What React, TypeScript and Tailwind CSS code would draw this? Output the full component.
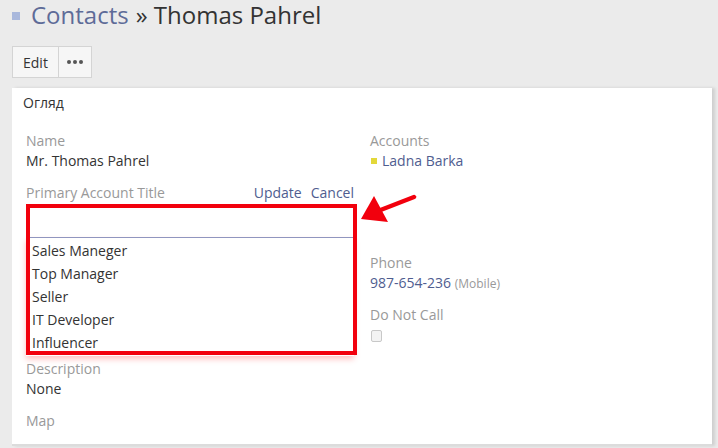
import React from 'react';

const font = { fontFamily: '"Open Sans", "Liberation Sans", sans-serif' };

function Field({ label, children, className = '' }: { label: string; children?: React.ReactNode; className?: string }) {
  return (
    <div className={className}>
      <div className="text-[14px] leading-[20px] text-[#999]">{label}</div>
      {children}
    </div>
  );
}

export default function App() {
  const titles = ['Sales Maneger', 'Top Manager', 'Seller', 'IT Developer', 'Influencer'];

  return (
    <div className="relative w-[718px] h-[448px] overflow-hidden bg-[#ebebeb] text-[#333]" style={font}>
      {/* header */}
      <div className="flex items-center h-[30px] pl-[12px] text-[24px] leading-[30px]">
        <span className="w-[8px] h-[8px] bg-[#a9b8dc] mr-[11px] mt-[1px]" />
        <span className="text-[#5e6b98]">Contacts</span>
        <span className="ml-[7px] text-[#333]">» Thomas Pahrel</span>
      </div>

      <div className="flex mt-[16px] ml-[12px] h-[32px]">
        <button className="px-[10px] h-full border border-[#d4d4d4] bg-[#f6f6f6] text-[14px] text-[#333]">Edit</button>
        <button className="w-[33px] h-full border border-l-0 border-[#d4d4d4] bg-[#f6f6f6] flex items-center justify-center gap-[2px]">
          <span className="w-[4px] h-[4px] rounded-full bg-[#555]" />
          <span className="w-[4px] h-[4px] rounded-full bg-[#555]" />
          <span className="w-[4px] h-[4px] rounded-full bg-[#555]" />
        </button>
      </div>

      {/* panel */}
      <div className="mt-[10px] ml-[12px] w-[700px] h-[358px] bg-white border-b-2 border-[#dcdcdc] shadow-[3px_0_3px_rgba(0,0,0,0.12)]">
        <div className="h-[31px] pl-[11px] pt-[5px] text-[14px] leading-[20px] text-[#333]">Огляд</div>
        <div className="grid grid-cols-[344px_1fr] pl-[14px] pt-[12px]">
          {/* left column */}
          <div>
            <Field label="Name">
              <div className="text-[14px] leading-[20px]">Mr. Thomas Pahrel</div>
            </Field>
            <div className="mt-[12px] w-[331px]">
              <div className="flex justify-between w-[328px] text-[14px] leading-[20px] h-[21px]">
                <span className="text-[#999]">Primary Account Title</span>
                <span className="text-[#4f5d8f]">
                  Update<span className="ml-[9px]">Cancel</span>
                </span>
              </div>
              <div className="relative">
                <div className="h-[34px] w-[328px] border-b border-[#8d9bc6] bg-white" />
                <div className="absolute left-0 top-[34px] w-[328px] pl-[6px] pt-[1px] pb-[2px] bg-white shadow-[0_3px_6px_rgba(255,0,0,0.25)] z-10">
                  {titles.map((t) => (
                    <div key={t} className="text-[14px] leading-[23px] text-[#333]">{t}</div>
                  ))}
                </div>
                <div className="absolute left-0 top-0 w-[331px] h-[151px] border-4 border-[#f2000d] z-20 pointer-events-none" />
              </div>
            </div>
            <Field label="Description" className="mt-[121px]">
              <div className="text-[14px] leading-[20px]">None</div>
            </Field>
            <Field label="Map" className="mt-[12px]" />
          </div>

          {/* right column */}
          <div>
            <Field label="Accounts">
              <div className="flex items-center text-[14px] leading-[20px] text-[#4f5d8f]">
                <span className="w-[6px] h-[6px] bg-[#e3d83a] ml-[1px] mr-[5px]" />
                Ladna Barka
              </div>
            </Field>
            <Field label="Phone" className="mt-[82px]">
              <div className="text-[14px] leading-[20px] text-[#4f5d8f]">
                987-654-236 <span className="text-[12px] text-[#999]">(Mobile)</span>
              </div>
            </Field>
            <Field label="Do Not Call" className="mt-[11px]">
              <div className="h-[20px] flex items-center">
                <span className="w-[11px] h-[12px] ml-[1px] mt-[2px] rounded-[2px] border border-[#c8c8c8] bg-[#f3f3f3]" />
              </div>
            </Field>
          </div>
        </div>
      </div>

      {/* annotation arrow */}
      <svg className="absolute left-[355px] top-[190px] pointer-events-none" width="70" height="40" viewBox="355 190 70 40">
        <line x1="414" y1="197" x2="378" y2="211" stroke="#f2000d" strokeWidth="4.5" strokeLinecap="round" />
        <polygon points="361,219 374,196 388,222" fill="#f2000d" />
      </svg>
    </div>
  );
}
